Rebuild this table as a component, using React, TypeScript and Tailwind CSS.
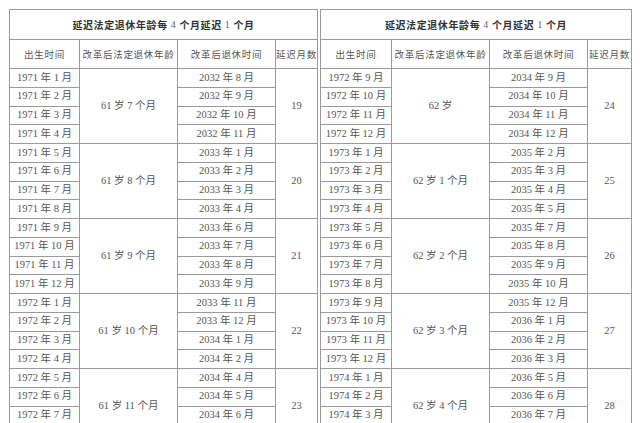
import React from 'react';

type Group = { age: string; delay: string; rows: [string, string][] };

const ym = (y: number, m: number) => `${y} 年 ${m} 月`;

function mk(age: string, delay: string, pairs: [number, number, number, number][]): Group {
  return { age, delay, rows: pairs.map(([a, b, c, d]) => [ym(a, b), ym(c, d)] as [string, string]) };
}

const leftGroups: Group[] = [
  mk('61 岁 7 个月', '19', [[1971, 1, 2032, 8], [1971, 2, 2032, 9], [1971, 3, 2032, 10], [1971, 4, 2032, 11]]),
  mk('61 岁 8 个月', '20', [[1971, 5, 2033, 1], [1971, 6, 2033, 2], [1971, 7, 2033, 3], [1971, 8, 2033, 4]]),
  mk('61 岁 9 个月', '21', [[1971, 9, 2033, 6], [1971, 10, 2033, 7], [1971, 11, 2033, 8], [1971, 12, 2033, 9]]),
  mk('61 岁 10 个月', '22', [[1972, 1, 2033, 11], [1972, 2, 2033, 12], [1972, 3, 2034, 1], [1972, 4, 2034, 2]]),
  mk('61 岁 11 个月', '23', [[1972, 5, 2034, 4], [1972, 6, 2034, 5], [1972, 7, 2034, 6], [1972, 8, 2034, 7]]),
];

const rightGroups: Group[] = [
  mk('62 岁', '24', [[1972, 9, 2034, 9], [1972, 10, 2034, 10], [1972, 11, 2034, 11], [1972, 12, 2034, 12]]),
  mk('62 岁 1 个月', '25', [[1973, 1, 2035, 2], [1973, 2, 2035, 3], [1973, 3, 2035, 4], [1973, 4, 2035, 5]]),
  mk('62 岁 2 个月', '26', [[1973, 5, 2035, 7], [1973, 6, 2035, 8], [1973, 7, 2035, 9], [1973, 8, 2035, 10]]),
  mk('62 岁 3 个月', '27', [[1973, 9, 2035, 12], [1973, 10, 2036, 1], [1973, 11, 2036, 2], [1973, 12, 2036, 3]]),
  mk('62 岁 4 个月', '28', [[1974, 1, 2036, 5], [1974, 2, 2036, 6], [1974, 3, 2036, 7], [1974, 4, 2036, 8]]),
];

const cell = 'bg-white flex items-center justify-center whitespace-nowrap';
const dataText = "text-[10.5px] leading-none text-[#555] font-['Liberation_Serif','Noto_Sans_CJK_SC',serif]";

function Table({ groups, cols }: { groups: Group[]; cols: string }) {
  return (
    <div
      className={`grid ${cols} grid-rows-[29px_28px_repeat(20,17.75px)] gap-px p-px pb-0 bg-[#9a9a9a]`}
    >
      <div
        className={`${cell} col-span-4 text-[10px] font-bold tracking-[0.6px] text-[#333] font-['Noto_Sans_CJK_SC',sans-serif]`}
      >
        延迟法定退休年龄每
        <span className="font-normal font-['Liberation_Serif',serif] text-[#666] mx-[3px]">4</span>
        个月延迟
        <span className="font-normal font-['Liberation_Serif',serif] text-[#666] mx-[3px]">1</span>
        个月
      </div>
      {['出生时间', '改革后法定退休年龄', '改革后退休时间', '延迟月数'].map((h) => (
        <div
          key={h}
          className={`${cell} text-[9.5px] tracking-[0.7px] text-[#555] font-['Noto_Sans_CJK_SC',sans-serif]`}
        >
          {h}
        </div>
      ))}
      {groups.map((g) =>
        g.rows.map((r, i) => (
          <React.Fragment key={g.age + i}>
            <div className={`${cell} ${dataText}`}>{r[0]}</div>
            {i === 0 && <div className={`${cell} ${dataText} row-span-4`}>{g.age}</div>}
            <div className={`${cell} ${dataText}`}>{r[1]}</div>
            {i === 0 && <div className={`${cell} ${dataText} row-span-4`}>{g.delay}</div>}
          </React.Fragment>
        ))
      )}
    </div>
  );
}

export default function App() {
  return (
    <div className="w-[640px] h-[423px] overflow-hidden bg-white pt-[9px] pl-[9px] flex items-start gap-[2px]">
      <Table groups={leftGroups} cols="grid-cols-[69px_97px_97px_41px]" />
      <Table groups={rightGroups} cols="grid-cols-[70px_97px_97px_43px]" />
    </div>
  );
}
